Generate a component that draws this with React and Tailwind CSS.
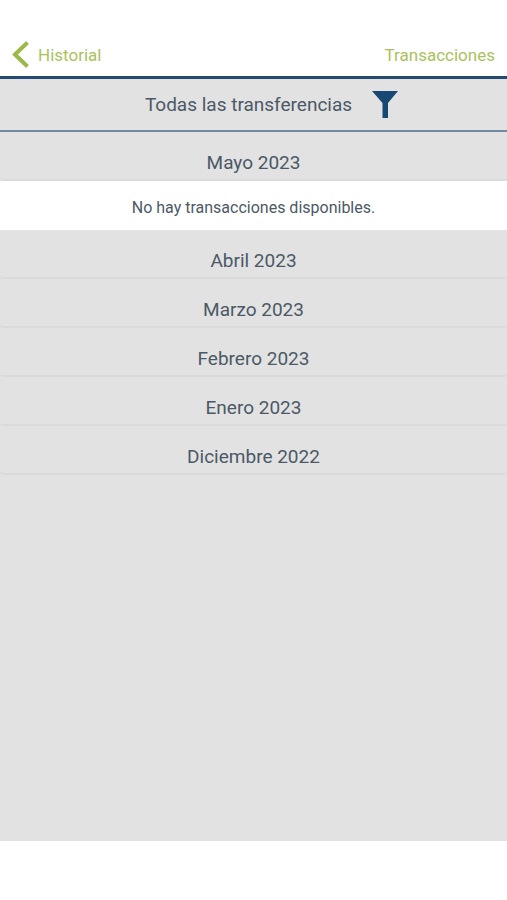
import React, { useState } from "react";

const months = [
  "Mayo 2023",
  "Abril 2023",
  "Marzo 2023",
  "Febrero 2023",
  "Enero 2023",
  "Diciembre 2022",
];

function Month({ name, open, onToggle }) {
  return (
    <section>
      <h2>
        <button
          type="button"
          aria-expanded={open}
          onClick={onToggle}
          className="block h-[49px] w-full rounded-b border-b-2 border-[#d9dadb] pt-[15px] text-center text-[19px] leading-8"
        >
          {name}
        </button>
      </h2>
      {open && (
        <p className="h-[49px] bg-white pt-[11px] text-center text-base leading-8">
          No hay transacciones disponibles.
        </p>
      )}
    </section>
  );
}

export default function App() {
  const [openMonth, setOpenMonth] = useState("Mayo 2023");

  return (
    <div className="flex min-h-screen flex-col bg-white font-[Roboto,sans-serif] text-[#4b5966]">
      <header className="flex items-center justify-between border-b-3 border-[#254b70] px-3 pt-9 text-[17px] text-[#a9c25d]">
        <a href="#historial" className="flex h-10 items-center gap-2">
          <svg
            className="h-[30px] w-[18px]"
            viewBox="0 0 18 30"
            fill="none"
            stroke="#9aba48"
            strokeWidth="4"
            aria-hidden="true"
          >
            <path d="M15.5 1.5 3 13.5 15.5 25.5" />
          </svg>
          Historial
        </a>
        <h1>Transacciones</h1>
      </header>
      <main className="flex-1 bg-[#e2e2e2]">
        <button
          type="button"
          className="flex h-[53px] w-full items-center justify-center gap-5 border-b-2 border-[#7389a2] pt-0.5 pl-9 text-[19px]"
        >
          Todas las transferencias
          <svg
            className="h-[30px] w-[26px]"
            viewBox="0 0 26 30"
            fill="#174874"
            aria-hidden="true"
          >
            <path d="M0 0H26L16 12V27H10.5V12Z" />
          </svg>
        </button>
        {months.map((name) => (
          <Month
            key={name}
            name={name}
            open={openMonth === name}
            onToggle={() => setOpenMonth(openMonth === name ? "" : name)}
          />
        ))}
      </main>
      <footer className="h-[59px] bg-white" />
    </div>
  );
}
